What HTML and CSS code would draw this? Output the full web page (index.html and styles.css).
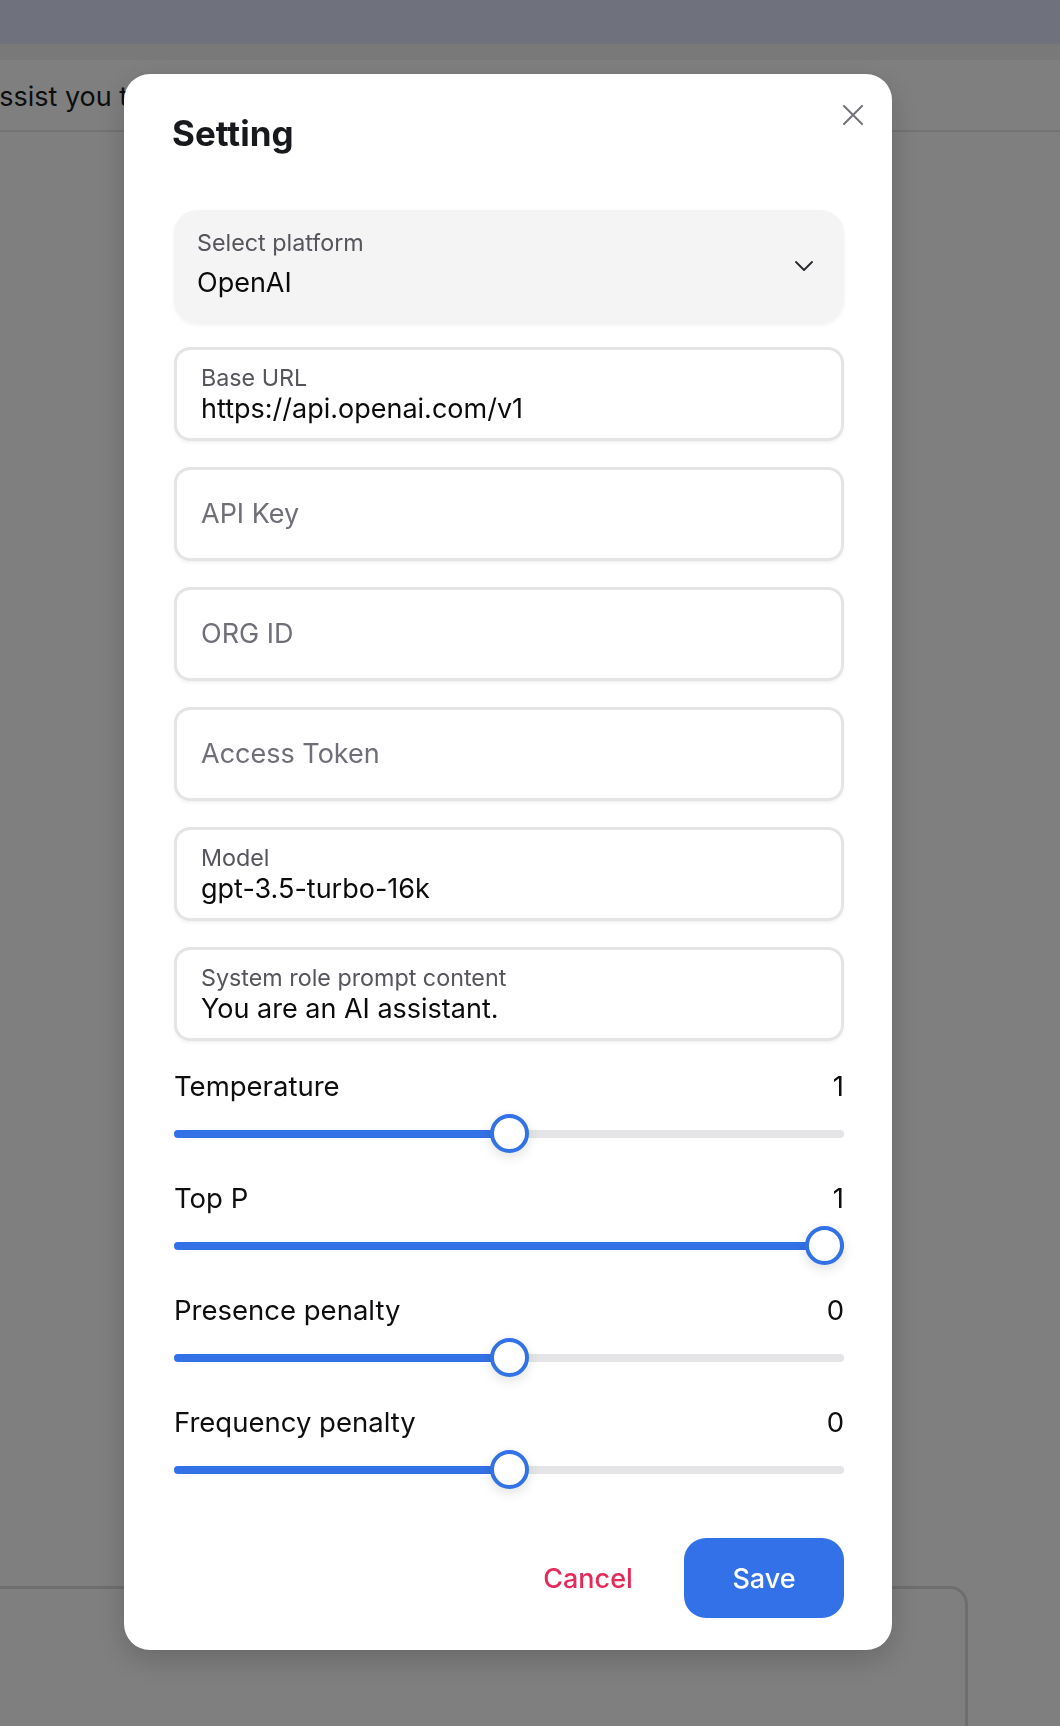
FILE: index.html
```html
<!DOCTYPE html>
<html lang="en">
<head>
<meta charset="utf-8">
<title>Setting</title>
<link rel="stylesheet" href="styles.css">
</head>
<body>
<div class="page">
  <div class="topbar"></div>
  <div class="strip"></div>
  <div class="chat-header"><span class="chat-text">assist you today?</span></div>
  <main class="main">
    <div class="composer"></div>
  </main>
</div>

<div class="overlay">
  <section class="modal" role="dialog" aria-label="Setting">
    <button class="close" aria-label="Close">
      <svg width="20" height="20" viewBox="0 0 20 20" fill="none" stroke="currentColor" stroke-width="2" stroke-linecap="round"><path d="M1 1L19 19M19 1L1 19"/></svg>
    </button>
    <h2 class="title">Setting</h2>

    <div class="select">
      <div class="select-body">
        <div class="select-label">Select platform</div>
        <div class="select-value">OpenAI</div>
      </div>
      <svg class="chevron" width="18" height="10" viewBox="0 0 18 10" fill="none" stroke="currentColor" stroke-width="1.8" stroke-linecap="round" stroke-linejoin="round"><path d="M1 1L9 9L17 1"/></svg>
    </div>

    <div class="fields">
      <div class="field"><div class="field-label">Base URL</div><div class="field-value">https://api.openai.com/v1</div></div>
      <div class="field field-empty"><div class="placeholder">API Key</div></div>
      <div class="field field-empty"><div class="placeholder">ORG ID</div></div>
      <div class="field field-empty"><div class="placeholder">Access Token</div></div>
      <div class="field"><div class="field-label">Model</div><div class="field-value">gpt-3.5-turbo-16k</div></div>
      <div class="field"><div class="field-label">System role prompt content</div><div class="field-value">You are an AI assistant.</div></div>
    </div>

    <div class="sliders">
      <div class="slider">
        <div class="slider-head"><span>Temperature</span><span>1</span></div>
        <div class="track"><div class="fill" style="width: calc(19.5px + 0.5 * (100% - 39px))"></div><div class="thumb" style="left: calc(0.5 * (100% - 39px))"></div></div>
      </div>
      <div class="slider">
        <div class="slider-head"><span>Top P</span><span>1</span></div>
        <div class="track"><div class="fill" style="width: 100%"></div><div class="thumb" style="left: calc(1 * (100% - 39px))"></div></div>
      </div>
      <div class="slider">
        <div class="slider-head"><span>Presence penalty</span><span>0</span></div>
        <div class="track"><div class="fill" style="width: calc(19.5px + 0.5 * (100% - 39px))"></div><div class="thumb" style="left: calc(0.5 * (100% - 39px))"></div></div>
      </div>
      <div class="slider">
        <div class="slider-head"><span>Frequency penalty</span><span>0</span></div>
        <div class="track"><div class="fill" style="width: calc(19.5px + 0.5 * (100% - 39px))"></div><div class="thumb" style="left: calc(0.5 * (100% - 39px))"></div></div>
      </div>
    </div>

    <div class="footer">
      <button class="btn btn-cancel">Cancel</button>
      <button class="btn btn-save">Save</button>
    </div>
  </section>
</div>
</body>
</html>
```

FILE: styles.css
```css
* { box-sizing: border-box; }

html, body {
  margin: 0;
  padding: 0;
  height: 100%;
  overflow: hidden;
}

body {
  font-family: Inter, "Noto Sans", "Liberation Sans", sans-serif;
  background: #ffffff;
  color: #111;
}

.page {
  height: 100vh;
  display: flex;
  flex-direction: column;
}

.topbar {
  height: 44px;
  background: #dfe2fa;
  flex: none;
}

.strip {
  height: 16px;
  background: #f3f3f3;
  flex: none;
}

.chat-header {
  height: 72px;
  flex: none;
  background: #ffffff;
  border-bottom: 2px solid #e6e6e6;
  display: flex;
  align-items: center;
  overflow: hidden;
  white-space: nowrap;
}

.chat-text {
  font-size: 27px;
  color: #1b1b1f;
  margin-left: -16px;
  padding-top: 3px;
}

.main {
  flex: 1;
  display: flex;
  flex-direction: column;
  justify-content: flex-end;
}

.composer {
  height: 150px;
  margin: 0 92px -10px -10px;
  border: 3px solid #dddddd;
  border-radius: 0 18px 0 0;
  background: #ffffff;
}

.overlay {
  position: fixed;
  inset: 0;
  background: rgba(0, 0, 0, 0.5);
  padding: 74px 0 0 124px;
}

.modal {
  position: relative;
  width: 768px;
  height: 1576px;
  background: #ffffff;
  border-radius: 26px;
  box-shadow: 0 10px 30px rgba(0, 0, 0, 0.18);
  padding: 38px 48px 32px 50px;
  display: flex;
  flex-direction: column;
}

.close {
  position: absolute;
  top: 31px;
  right: 29px;
  width: 20px;
  height: 20px;
  padding: 0;
  border: 0;
  background: transparent;
  color: #72727a;
  display: flex;
}

.title {
  margin: 0 0 0 -2px;
  font-size: 35px;
  line-height: 42px;
  font-weight: 700;
  color: #17191c;
}

.select {
  margin-top: 56px;
  height: 113px;
  background: #f4f4f5;
  border-radius: 24px;
  box-shadow: 0 2px 4px rgba(0, 0, 0, 0.06);
  display: flex;
  align-items: center;
  padding: 0 31px 0 23px;
}

.select-body {
  flex: 1;
  display: flex;
  flex-direction: column;
  padding-bottom: 3px;
}

.select-label {
  font-size: 23.3px;
  line-height: 26px;
  color: #55555c;
}

.select-value {
  font-size: 27px;
  line-height: 34px;
  margin-top: 10px;
  color: #0b0b0d;
}

.chevron {
  color: #26262b;
  flex: none;
  margin-top: -2px;
}

.fields {
  margin-top: 24px;
  display: flex;
  flex-direction: column;
  gap: 26px;
}

.field {
  height: 94px;
  border: 3px solid #e4e4e7;
  border-radius: 16px;
  box-shadow: 0 2px 3px rgba(0, 0, 0, 0.05);
  padding: 15px 24px 0 24px;
  display: flex;
  flex-direction: column;
}

.field-empty {
  padding-top: 0;
  justify-content: center;
}

.field-label {
  font-size: 23.3px;
  line-height: 26px;
  color: #55555c;
}

.field-value {
  font-size: 27px;
  line-height: 32px;
  margin-top: 2px;
  color: #0b0b0d;
}

.placeholder {
  font-size: 27px;
  line-height: 32px;
  color: #6f6f77;
}

.sliders {
  margin-top: 29px;
  display: flex;
  flex-direction: column;
  gap: 28px;
}

.slider-head {
  display: flex;
  justify-content: space-between;
  font-size: 27.5px;
  line-height: 32px;
  color: #0e0e10;
}

.track {
  position: relative;
  height: 40px;
  margin-top: 12px;
  display: flex;
  align-items: center;
}

.track::before {
  content: "";
  position: absolute;
  left: 0;
  right: 0;
  top: 16px;
  height: 8px;
  border-radius: 4px;
  background: #e5e5e8;
}

.fill {
  position: relative;
  height: 8px;
  border-radius: 4px;
  background: #3272e6;
}

.thumb {
  position: absolute;
  top: 0;
  width: 39px;
  height: 39px;
  border-radius: 50%;
  background: #ffffff;
  border: 4px solid #3272e6;
  box-shadow: 0 4px 12px rgba(0, 0, 0, 0.12);
}

.footer {
  margin-top: 48px;
  display: flex;
  justify-content: flex-end;
  gap: 16px;
}

.btn {
  height: 80px;
  width: 160px;
  border: 0;
  border-radius: 22px;
  font-family: inherit;
  font-size: 27px;
  font-weight: 500;
  background: transparent;
  cursor: pointer;
}

.btn-cancel {
  color: #e52a5a;
}

.btn-save {
  background: #3371e9;
  color: #ffffff;
}
```
